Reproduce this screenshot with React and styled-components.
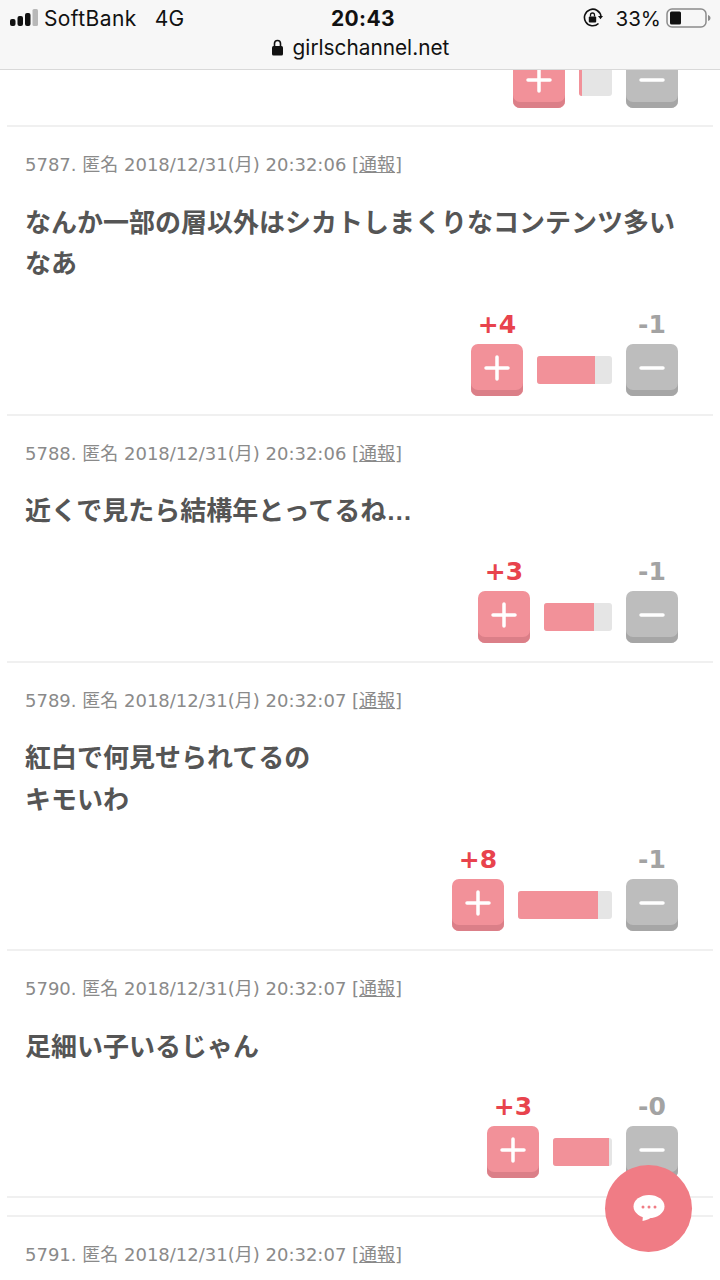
import React from "react";
import styled, { createGlobalStyle } from "styled-components";

const Global = createGlobalStyle`
  html, body { margin: 0; padding: 0; background: #fff; }
  * { box-sizing: border-box; }
`;
const Page = styled.div`
  position: relative; width: 720px; height: 1280px; overflow: hidden;
  display: flex; flex-direction: column; background: #fff;
`;
const TopBar = styled.header`
  flex: none; height: 70px; background: #f7f7f7; border-bottom: 1px solid #d9d9d9;
  font-family: Inter, "Liberation Sans", sans-serif; color: #111; position: relative; z-index: 2;
`;
const StatusRow = styled.div`
  display: grid; grid-template-columns: 1fr auto 1fr; align-items: center;
  height: 36px; padding: 0 8px 0 10px;
`;
const Carrier = styled.div`
  display: flex; align-items: center; font-size: 21px; letter-spacing: .4px;
`;
const CarrierName = styled.span` margin-left: 6px; `;
const Network = styled.span` margin-left: 18px; `;
const Clock = styled.div` margin-left: 4px; font-size: 21px; font-weight: 700; letter-spacing: .4px; `;
const StatusRight = styled.div`
  display: flex; align-items: center; justify-content: flex-end; font-size: 20.5px;
`;
const Percent = styled.span` margin: 0 5px 0 13px; `;
const AddressRow = styled.div`
  display: flex; align-items: center; justify-content: center; gap: 9px;
  font-size: 20.8px; height: 22px;
`;
const Feed = styled.main`
  flex: 1; min-height: 0; overflow: hidden; padding: 0 7px;
`;
const Item = styled.article`
  padding: 26px 18px 18px; border-bottom: 2px solid #f0f0f0;
`;
const LastItem = styled(Item)` border-bottom: none; `;
const PartialItem = styled.div`
  margin-top: -14px; padding: 0 18px 17px; border-bottom: 2px solid #f0f0f0;
`;
const Spacer = styled.div` height: 19px; border-bottom: 2px solid #f0f0f0; `;
const Meta = styled.div`
  font: 400 18px/24px "DejaVu Sans", "Noto Sans CJK JP", sans-serif; color: #8a8a8a; white-space: nowrap;
`;
const Report = styled.span` text-decoration: underline; `;
const Body = styled.p`
  margin: 25.5px 0 0; font: 700 26px/41.5px "Liberation Sans", "Noto Sans CJK JP", sans-serif; color: #555;
`;
const VoteRow = styled.div`
  display: flex; justify-content: flex-end; align-items: flex-start; gap: 14px;
  padding-right: 17px;
`;
const VoteArea = styled(VoteRow)` margin-top: 26px; `;
const VoteCol = styled.div`
  width: 52px; display: flex; flex-direction: column; align-items: center; gap: 6px;
`;
const Count = styled.div`
  font: 700 25px/26px "DejaVu Sans", sans-serif; white-space: nowrap;
  color: ${p => (p.$up ? "#e8434d" : "#a3a3a3")};
`;
const VoteButton = styled.div`
  width: 52px; height: 52px; border-radius: 7px;
  display: flex; align-items: center; justify-content: center; padding-bottom: 4px;
  background: ${p => (p.$up ? "#f29199" : "#bdbdbd")};
  box-shadow: inset 0 -6px 0 ${p => (p.$up ? "#db7f88" : "#a6a6a6")};
`;
const Bar = styled.div`
  margin-top: 12px; height: 28px; border-radius: 3px; overflow: hidden; background: #e5e5e5;
  width: ${p => p.$width}px;
`;
const BarOffset = styled.div` padding-top: 32px; `;
const BarFill = styled.div`
  height: 100%; background: #f29199; width: ${p => p.$fill}px;
`;
const Fab = styled.div`
  position: absolute; left: 605px; top: 1165px; width: 87px; height: 87px; border-radius: 50%;
  background: #f07c85; display: flex; align-items: center; justify-content: center; z-index: 3;
`;

const Plus = () => (
  <svg width="26" height="26" viewBox="0 0 26 26"><path d="M13 2v22M2 13h22" stroke="#fff" strokeWidth="3.5" strokeLinecap="round" /></svg>
);
const Minus = () => (
  <svg width="26" height="26" viewBox="0 0 26 26"><path d="M2 13h22" stroke="#fff" strokeWidth="3.5" strokeLinecap="round" /></svg>
);

function Votes({ up, down, width, fill }) {
  return (
    <VoteArea>
      <VoteCol><Count $up>+{up}</Count><VoteButton $up><Plus /></VoteButton></VoteCol>
      <BarOffset><Bar $width={width}><BarFill $fill={fill} /></Bar></BarOffset>
      <VoteCol><Count>-{down}</Count><VoteButton><Minus /></VoteButton></VoteCol>
    </VoteArea>
  );
}

function Comment({ no, time, lines, ...votes }) {
  return (
    <Item>
      <Meta>{no}. 匿名 2018/12/31(月) {time} [<Report>通報</Report>]</Meta>
      <Body>{lines.map((l, i) => <React.Fragment key={i}>{i > 0 && <br />}{l}</React.Fragment>)}</Body>
      <Votes {...votes} />
    </Item>
  );
}

const comments = [
  { no: 5787, time: "20:32:06", lines: ["なんか一部の層以外はシカトしまくりなコンテンツ多い", "なあ"], up: 4, down: 1, width: 75, fill: 58 },
  { no: 5788, time: "20:32:06", lines: ["近くで見たら結構年とってるね…"], up: 3, down: 1, width: 68, fill: 50 },
  { no: 5789, time: "20:32:07", lines: ["紅白で何見せられてるの", "キモいわ"], up: 8, down: 1, width: 94, fill: 80 },
  { no: 5790, time: "20:32:07", lines: ["足細い子いるじゃん"], up: 3, down: 0, width: 59, fill: 56 },
];

export default function App() {
  return (
    <Page>
      <Global />
      <TopBar>
        <StatusRow>
          <Carrier>
            <svg width="28" height="18" viewBox="0 0 28 18">
              <rect x="0" y="10" width="5.500" height="7" rx="2" fill="#111" />
              <rect x="7.500" y="7" width="5.500" height="10" rx="2" fill="#111" />
              <rect x="15" y="4" width="5.500" height="13" rx="2" fill="#111" />
              <rect x="22.500" y="0" width="5.500" height="17" rx="1.500" fill="#b8b8b8" />
            </svg>
            <CarrierName>SoftBank</CarrierName>
            <Network>4G</Network>
          </Carrier>
          <Clock>20:43</Clock>
          <StatusRight>
            <svg width="20" height="20" viewBox="0 0 20 20" fill="none">
              <path d="M15.500 15.500A8.300 8.300 0 1 1 18 8.500" stroke="#111" strokeWidth="1.600" />
              <path d="M15 8h5l-2.500 3.200z" fill="#111" />
              <rect x="5.800" y="8.500" width="7.400" height="6" rx="1" fill="#111" />
              <path d="M7.500 8.500V7a2 2 0 0 1 4 0v1.500" stroke="#111" strokeWidth="1.300" />
            </svg>
            <Percent>33%</Percent>
            <svg width="46" height="20" viewBox="0 0 46 20" fill="none">
              <rect x="1" y="1" width="39" height="18" rx="5" stroke="#8c8c8c" strokeWidth="1.500" />
              <rect x="4" y="3.500" width="11" height="13" rx="1.500" fill="#111" />
              <path d="M42 7v6c1.500-.5 2.500-1.500 2.500-3S43.500 7.500 42 7z" fill="#8c8c8c" />
            </svg>
          </StatusRight>
        </StatusRow>
        <AddressRow>
          <svg width="13" height="17" viewBox="0 0 13 17" fill="none">
            <rect x="1" y="7" width="11" height="9.500" rx="1.500" fill="#111" />
            <path d="M3.500 7.500V4.500a3 3 0 0 1 6 0v3" stroke="#111" strokeWidth="1.600" />
          </svg>
          girlschannel.net
        </AddressRow>
      </TopBar>
      <Feed>
        <PartialItem>
          <VoteRow>
            <VoteCol><VoteButton $up><Plus /></VoteButton></VoteCol>
            <Bar $width={33}><BarFill $fill={3} /></Bar>
            <VoteCol><VoteButton><Minus /></VoteButton></VoteCol>
          </VoteRow>
        </PartialItem>
        {comments.map(c => <Comment key={c.no} {...c} />)}
        <Spacer />
        <LastItem>
          <Meta>5791. 匿名 2018/12/31(月) 20:32:07 [<Report>通報</Report>]</Meta>
        </LastItem>
      </Feed>
      <Fab>
        <svg width="34" height="30" viewBox="0 0 34 30">
          <ellipse cx="17" cy="12.500" rx="15.500" ry="11.500" fill="#fff" />
          <path d="M11 21l-.5 6c4-.8 8-2.500 11-5z" fill="#fff" />
          <circle cx="11" cy="13" r="1.500" fill="#f07c85" />
          <circle cx="17" cy="13" r="1.500" fill="#f07c85" />
          <circle cx="23" cy="13" r="1.500" fill="#f07c85" />
        </svg>
      </Fab>
    </Page>
  );
}
